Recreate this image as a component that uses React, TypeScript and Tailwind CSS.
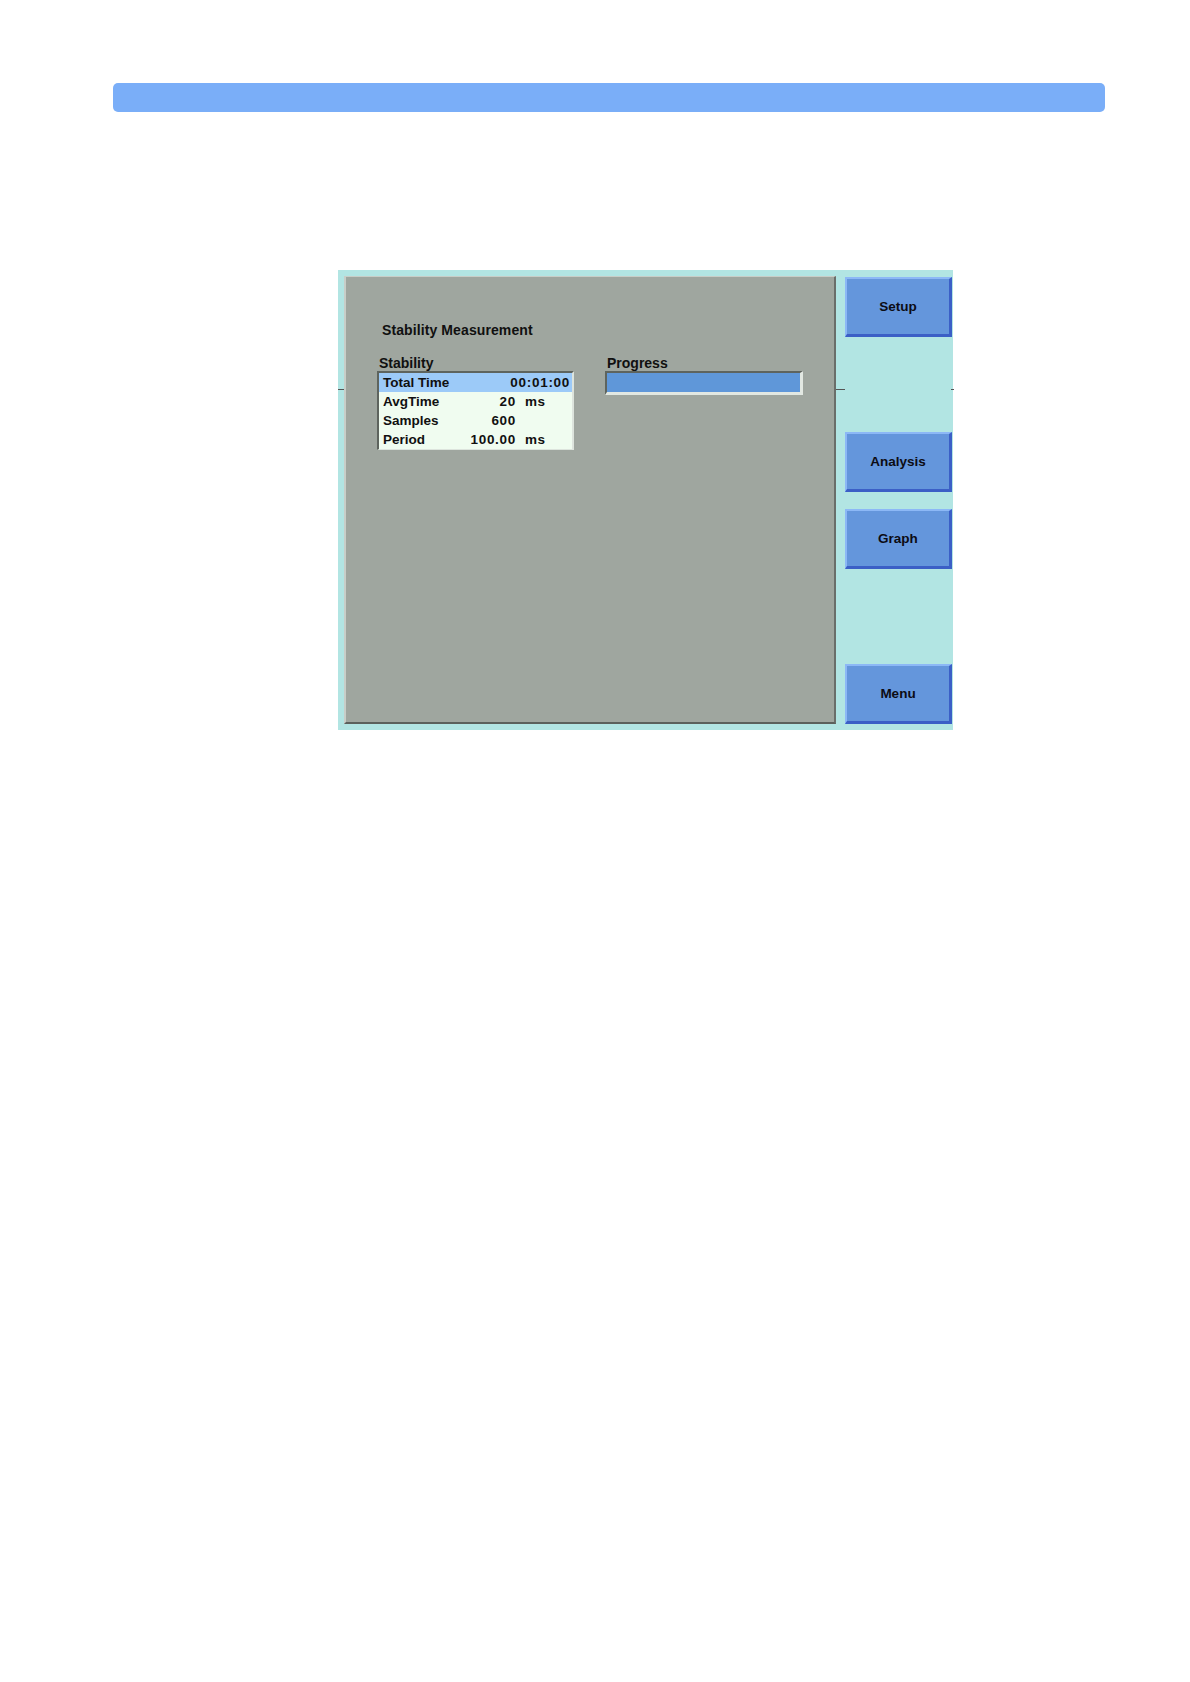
/**
 * Stability Measurement screen — instrument UI mock.
 * Header strip, grey work panel with stability table + progress bar,
 * and a column of soft-key buttons on the right.
 */

const FONT = { fontFamily: '"Liberation Sans", Arial, sans-serif' }

const SOFTKEY =
  'flex h-[60px] w-[107px] items-center justify-center border-t-2 border-l-2 border-b-[3px] border-r-[3px] border-t-[#8cb8f6] border-l-[#8cb8f6] border-b-[#3b5fc6] border-r-[#3b5fc6] bg-[#6496dc] pt-[2px] text-[13.5px] font-bold text-[#0c0c14]'

const ROW = 'flex h-[19px] items-center text-[13.5px] font-bold leading-none text-[#101010]'

interface Param {
  label: string
  value: string
  unit?: string
}

const PARAMS: Param[] = [
  { label: 'AvgTime', value: '20', unit: 'ms' },
  { label: 'Samples', value: '600' },
  { label: 'Period', value: '100.00', unit: 'ms' },
]

function SoftKey({ label }: { label: string }) {
  return (
    <button type="button" className={SOFTKEY}>
      {label}
    </button>
  )
}

export default function App() {
  return (
    <div className="min-h-[1682px] w-[1190px] bg-white pt-[83px]" style={FONT}>
      {/* ── Header strip ── */}
      <div className="ml-[113px] h-[29px] w-[992px] rounded-[5px] bg-[#7aaef8]" />

      {/* ── Instrument screen ── */}
      <div className="relative ml-[338px] mt-[158px] flex h-[460px] w-[615px] bg-[#b2e5e3] pl-[6px] pt-[6px]">
        {/* tick marks */}
        <div className="absolute left-0 top-[119px] h-px w-[6px] bg-[#555]" />
        <div className="absolute left-[498px] top-[119px] h-px w-[9px] bg-[#555]" />
        <div className="absolute left-[613px] top-[119px] h-px w-[3px] bg-[#555]" />

        {/* ── Grey work panel ── */}
        <div className="h-[448px] w-[492px] border-t border-l-2 border-b-2 border-r-2 border-t-[#c8cec8] border-l-[#c8cec8] border-b-[#5c605c] border-r-[#6a6e6a] bg-[#9fa69f] pl-[31px] pt-[45px]">
          <p className="ml-[5px] text-[14px] font-bold leading-[16px] tracking-[0.1px] text-[#101010]">Stability Measurement</p>

          <div className="mt-[17px] flex gap-[31px]">
            {/* Stability table */}
            <div className="w-[197px]">
              <p className="ml-[2px] text-[14px] font-bold leading-[16px] text-[#101010]">Stability</p>
              <div className="border-t-2 border-l-2 border-b border-r-2 border-t-[#5e645e] border-l-[#5e645e] border-b-[#dde4dd] border-r-[#dde4dd] bg-[#f0fcf0]">
                <div className={`${ROW} justify-between bg-[#9ccaf8] pl-[4px] pr-[2px]`}>
                  <span>Total Time</span>
                  <span className="tracking-[0.7px]">00:01:00</span>
                </div>
                {PARAMS.map((p) => (
                  <div key={p.label} className={ROW}>
                    <span className="w-[88px] pl-[4px]">{p.label}</span>
                    <span className="w-[49px] text-right tracking-[0.7px]">{p.value}</span>
                    {p.unit && <span className="ml-[9px] tracking-[0.4px]">{p.unit}</span>}
                  </div>
                ))}
              </div>
            </div>

            {/* Progress */}
            <div className="w-[198px]">
              <p className="ml-[2px] text-[14px] font-bold leading-[16px] text-[#101010]">Progress</p>
              <div className="h-[24px] border-t-2 border-l-2 border-b-[3px] border-r-[3px] border-t-[#5e645e] border-l-[#5e645e] border-b-[#e2e8e2] border-r-[#e2e8e2] bg-[#5f97d9]" />
            </div>
          </div>
        </div>

        {/* ── Soft keys ── */}
        <div className="ml-[9px] flex flex-col pt-px">
          <SoftKey label="Setup" />
          <div className="mt-[95px]">
            <SoftKey label="Analysis" />
          </div>
          <div className="mt-[17px]">
            <SoftKey label="Graph" />
          </div>
          <div className="mt-[95px]">
            <SoftKey label="Menu" />
          </div>
        </div>
      </div>
    </div>
  )
}
